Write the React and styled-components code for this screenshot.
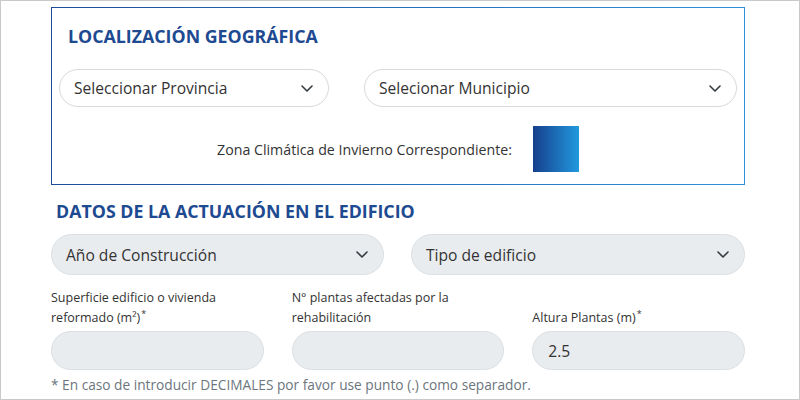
import React from "react";
import styled, { createGlobalStyle } from "styled-components";

const Global = createGlobalStyle`
  html, body { margin: 0; padding: 0; background: #fff; }
  * { box-sizing: border-box; }
`;

const Frame = styled.div`
  width: 800px;
  height: 400px;
  border: 1px solid #c9c9c9;
  overflow: hidden;
  padding: 6px 0 0 50px;
  font-family: "Open Sans", "Noto Sans", sans-serif;
  color: #333;
`;

const Column = styled.div`
  width: 694px;
  display: flex;
  flex-direction: column;
`;

const GeoBox = styled.section`
  height: 178px;
  border: 1px solid;
  border-image: linear-gradient(to right, #1f4c98, #2b92da) 1;
  padding: 17px 7px 0 7px;
  display: flex;
  flex-direction: column;
`;

const Heading = styled.h2`
  margin: 0;
  padding-left: ${(p) => p.$indent || 0}px;
  font-size: 17.8px;
  line-height: 22px;
  font-weight: 700;
  color: #1d4a91;
`;

const Row = styled.div`
  display: flex;
  gap: ${(p) => p.$gap}px;
  margin-top: ${(p) => p.$top}px;
`;

const Select = styled.div`
  width: ${(p) => p.$w}px;
  height: ${(p) => p.$h}px;
  border-radius: 999px;
  border: 1px solid ${(p) => (p.$filled ? "#dcdfe3" : "#d6d9de")};
  background: ${(p) => (p.$filled ? "#e9ecef" : "#fff")};
  display: flex;
  align-items: center;
  justify-content: space-between;
  padding: 0 15px 0 14px;
  font-size: 15.6px;
  color: #333;
`;

const Chevron = () => (
  <svg width="12" height="7" viewBox="0 0 12 7" fill="none">
    <path d="M1 1l5 5 5-5" stroke="#343a40" strokeWidth="1.6" strokeLinecap="round" strokeLinejoin="round" />
  </svg>
);

const ZoneRow = styled.div`
  display: flex;
  align-items: center;
  justify-content: center;
  gap: 21px;
  margin-top: 19px;
  font-size: 14.2px;
  color: #333;
`;

const ZoneSwatch = styled.div`
  width: 46px;
  height: 46px;
  background: linear-gradient(to right, #163f8d, #2299de);
`;

const Field = styled.div`
  width: 213px;
  display: flex;
  flex-direction: column;
  justify-content: flex-end;
`;

const Label = styled.label`
  font-size: 12.5px;
  line-height: 20px;
  color: #333;
  margin-bottom: 3px;
`;

const Star = styled.sup`
  font-size: 9px;
  line-height: 0;
  margin-left: 1px;
`;

const Input = styled.div`
  height: 39px;
  border-radius: 999px;
  border: 1px solid #dcdfe3;
  background: #e9ecef;
  display: flex;
  align-items: center;
  padding: 0 15px;
  font-size: 15.6px;
  color: #333;
`;

const Note = styled.p`
  margin: 5px 0 0 0;
  font-size: 13.7px;
  line-height: 20px;
  color: #6c757d;
`;

export default function App() {
  return (
    <>
      <Global />
      <Frame>
        <Column>
          <GeoBox>
            <Heading $indent={9}>LOCALIZACIÓN GEOGRÁFICA</Heading>
            <Row $gap={35} $top={22}>
              <Select $w={270} $h={38}>
                Seleccionar Provincia <Chevron />
              </Select>
              <Select $w={373} $h={38}>
                Selecionar Municipio <Chevron />
              </Select>
            </Row>
            <ZoneRow>
              <span>Zona Climática de Invierno Correspondiente:</span>
              <ZoneSwatch />
            </ZoneRow>
          </GeoBox>
          <Row $gap={0} $top={15}>
            <Heading $indent={5}>DATOS DE LA ACTUACIÓN EN EL EDIFICIO</Heading>
          </Row>
          <Row $gap={27} $top={12}>
            <Select $w={333} $h={41} $filled>
              Año de Construcción <Chevron />
            </Select>
            <Select $w={334} $h={41} $filled>
              Tipo de edificio <Chevron />
            </Select>
          </Row>
          <Row $gap={28} $top={13}>
            <Field>
              <Label>
                Superficie edificio o vivienda
                <br />
                reformado (m²)<Star>*</Star>
              </Label>
              <Input />
            </Field>
            <Field>
              <Label>
                N° plantas afectadas por la
                <br />
                rehabilitación
              </Label>
              <Input />
            </Field>
            <Field>
              <Label>
                Altura Plantas (m)<Star>*</Star>
              </Label>
              <Input>2.5</Input>
            </Field>
          </Row>
          <Note>* En caso de introducir DECIMALES por favor use punto (.) como separador.</Note>
        </Column>
      </Frame>
    </>
  );
}
